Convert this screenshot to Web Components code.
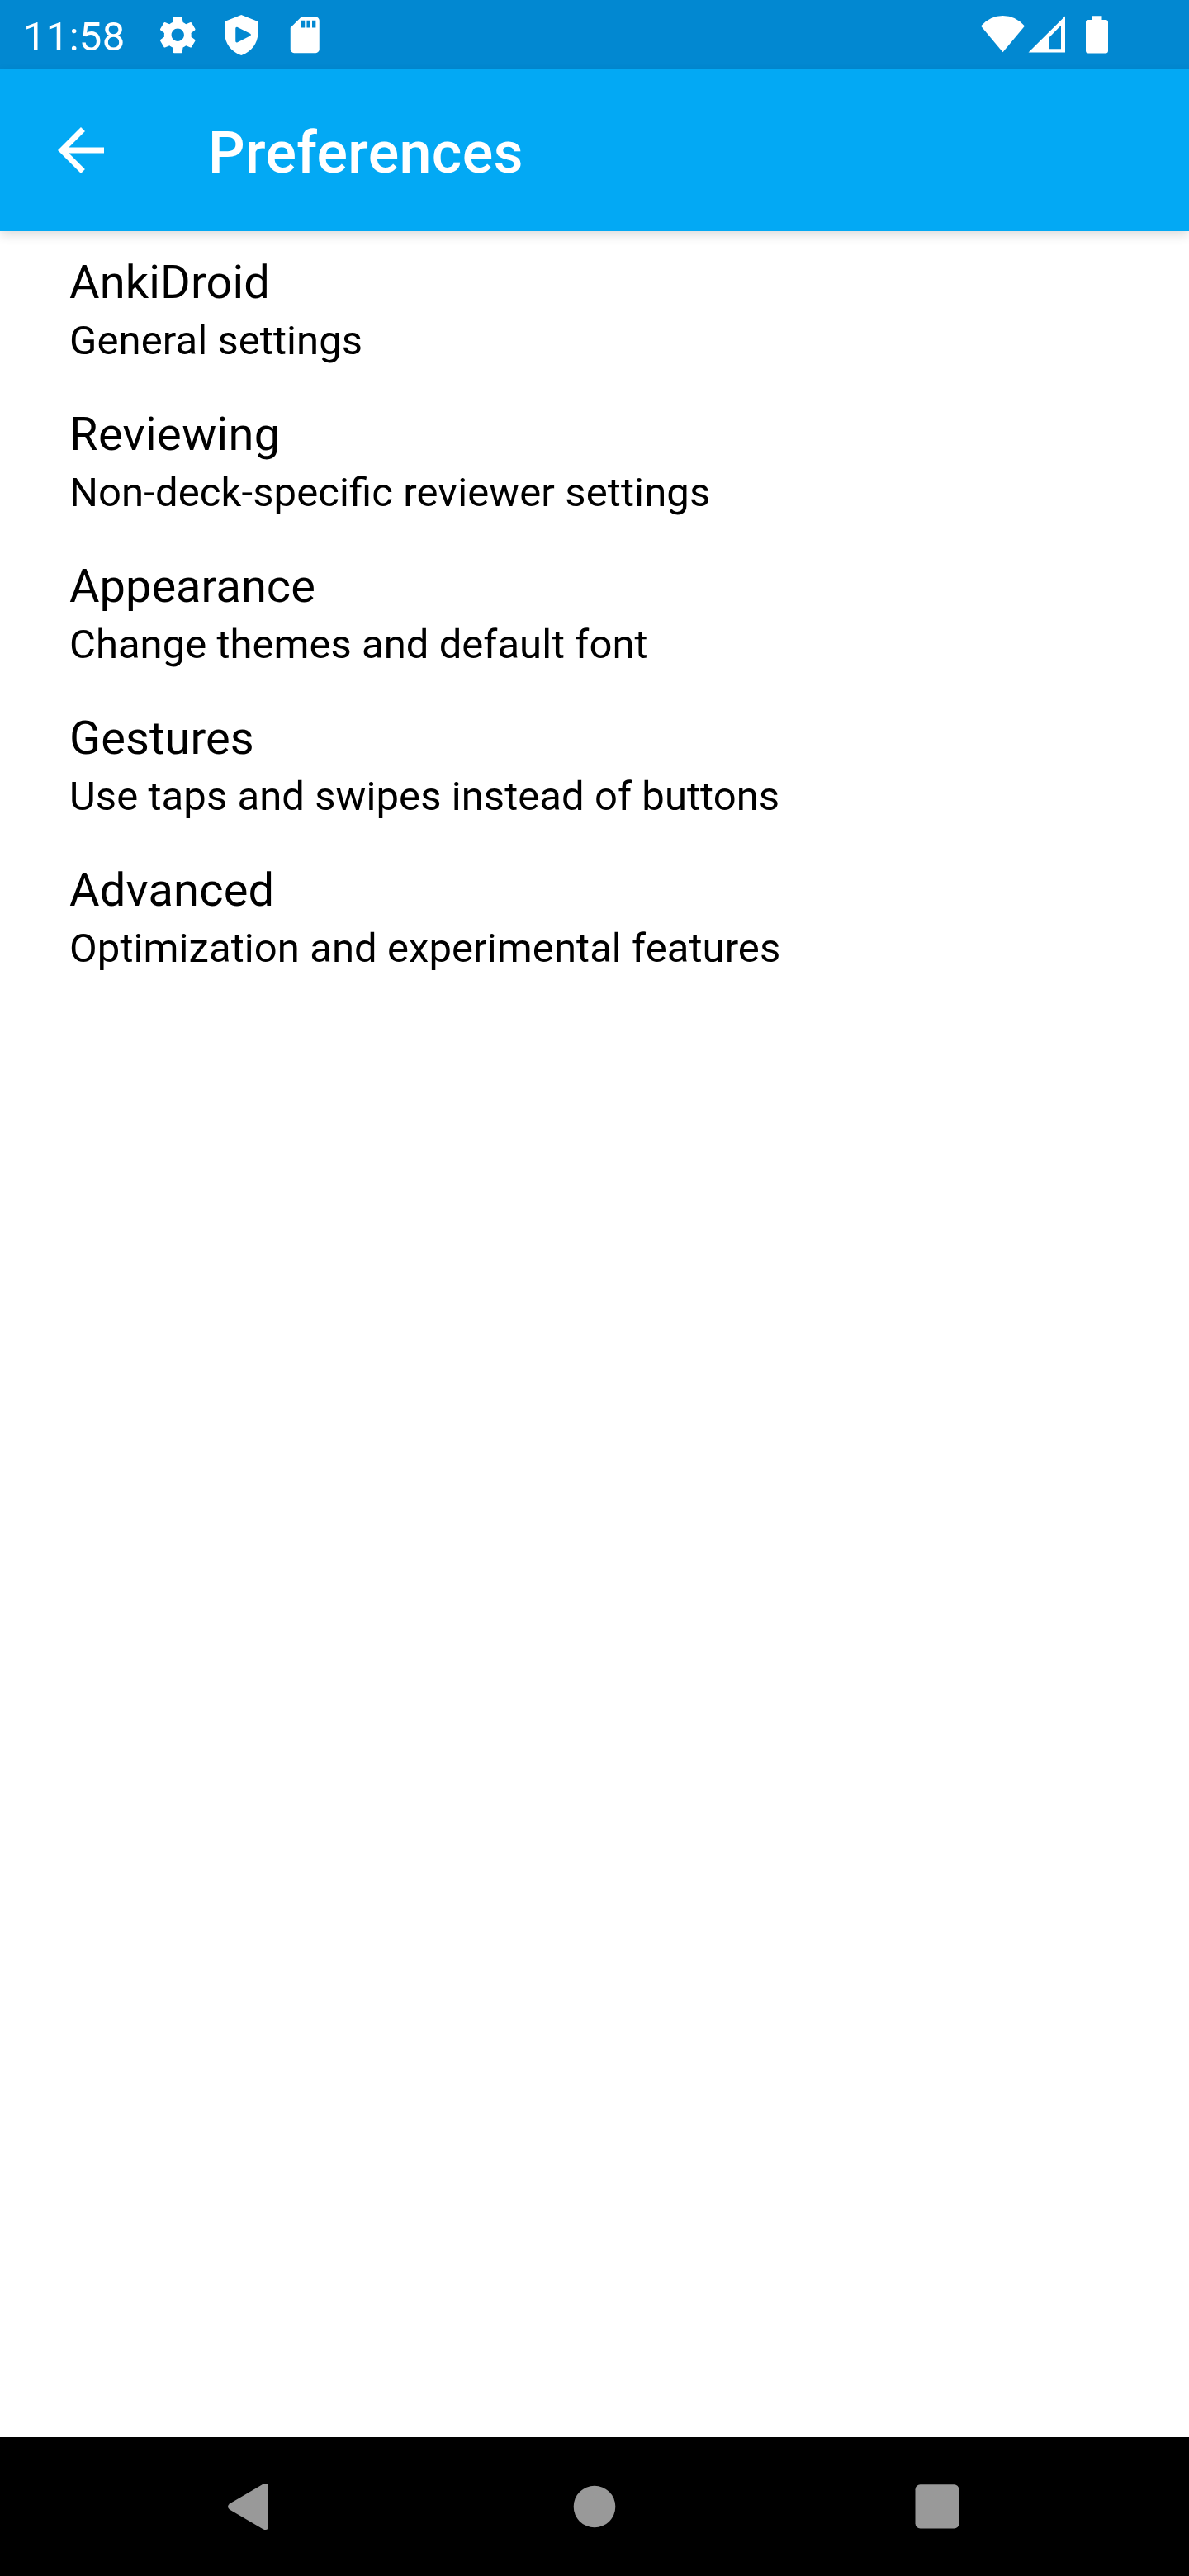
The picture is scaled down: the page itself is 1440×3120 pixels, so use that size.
<!DOCTYPE html>
<html lang="en">
<head>
<meta charset="utf-8">
<title>Preferences</title>
<style>
html,body{margin:0;padding:0;background:#fff}
body{font-family:Roboto,"Liberation Sans",sans-serif}
</style>
</head>
<body>
<phone-screen>
  <status-bar slot="top" time="11:58"></status-bar>
  <app-toolbar slot="top">Preferences</app-toolbar>
  <pref-item style="--t:.14px;--s:.08px">AnkiDroid<span slot="summary">General settings</span></pref-item>
  <pref-item style="--t:.37px;--s:.11px">Reviewing<span slot="summary">Non-deck-specific reviewer settings</span></pref-item>
  <pref-item style="--t:0px;--s:.03px">Appearance<span slot="summary">Change themes and default font</span></pref-item>
  <pref-item style="--t:.1px;--s:.07px">Gestures<span slot="summary">Use taps and swipes instead of buttons</span></pref-item>
  <pref-item style="--t:.2px;--s:.08px">Advanced<span slot="summary">Optimization and experimental features</span></pref-item>
  <nav-bar slot="bottom"></nav-bar>
</phone-screen>
<script>
const define = (name, html) => customElements.define(name, class extends HTMLElement {
  constructor() {
    super();
    this.attachShadow({mode: 'open'}).innerHTML = html;
  }
  connectedCallback() {
    const t = this.shadowRoot.querySelector('time');
    if (t) t.textContent = this.getAttribute('time');
  }
});

define('phone-screen', `
<style>
:host{display:flex;flex-direction:column;width:1440px;height:3120px;background:#fff;overflow:hidden}
main{flex:1;display:flex;flex-direction:column}
</style>
<slot name="top"></slot><main><slot></slot></main><slot name="bottom"></slot>`);

define('status-bar', `
<style>
:host{display:flex;justify-content:space-between;height:84px;background:#0288d1;color:#fff}
div{display:flex;align-items:flex-start}
time{font-size:49px;line-height:57px;letter-spacing:.3px;padding:16px 0 0 28px;width:161px}
svg{display:block;fill:#fff;margin-top:16px;flex:none}
.l{width:52.5px;height:52.5px;margin-right:24.5px}
</style>
<div>
<time></time>
<svg class="l" viewBox="0 0 24 24"><path d="M19.43 12.98c.04-.32.07-.64.07-.98s-.03-.66-.07-.98l2.11-1.65c.19-.15.24-.42.12-.64l-2-3.46c-.12-.22-.39-.3-.61-.22l-2.49 1c-.52-.4-1.08-.73-1.69-.98l-.38-2.65A.488.488 0 0 0 14 2h-4c-.25 0-.46.18-.49.42l-.38 2.65c-.61.25-1.17.59-1.69.98l-2.49-1c-.23-.09-.49 0-.61.22l-2 3.46c-.13.22-.07.49.12.64l2.11 1.65c-.04.32-.07.65-.07.98s.03.66.07.98l-2.11 1.65c-.19.15-.24.42-.12.64l2 3.46c.12.22.39.3.61.22l2.49-1c.52.4 1.08.73 1.69.98l.38 2.65c.03.24.24.42.49.42h4c.25 0 .46-.18.49-.42l.38-2.65c.61-.25 1.17-.59 1.69-.98l2.49 1c.23.09.49 0 .61-.22l2-3.46c.12-.22.07-.49-.12-.64l-2.11-1.65zM12 15.5c-1.93 0-3.5-1.57-3.5-3.5s1.57-3.5 3.5-3.5 3.5 1.57 3.5 3.5-1.57 3.5-3.5 3.5z"/></svg>
<svg class="l" viewBox="0 0 24 24"><path fill-rule="evenodd" d="M12 .9L2.800 4.600v6.600c0 5.400 3.700 10.300 9.200 12.100 5.500-1.800 9.200-6.700 9.200-12.100V4.600zM8.800 8.600c0-.8.5-1.100 1.100-.8l6.900 3.400c.7.4.7 1 0 1.400l-6.900 3.500c-.6.300-1.100 0-1.100-.8z"/></svg>
<svg class="l" viewBox="0 0 24 24"><path d="M18 2h-8L4 8v12c0 1.100.9 2 2 2h12c1.100 0 2-.9 2-2V4c0-1.100-.9-2-2-2zm-6 6h-2V4h2zm3 0h-2V4h2zm3 0h-2V4h2z"/></svg>
</div>
<svg width="260" height="52" viewBox="1180 16 260 52">
<path d="M1188 31.500Q1199 19 1214.500 19T1241 31.500L1214.500 63.300z"/>
<path fill-rule="evenodd" d="M1245.500 63.600L1290 19.500V63.600zM1270 46V59.300H1285V30.700z"/>
<path d="M1323 19.200H1334.500V24H1339Q1342 24 1342 27V61.500Q1342 64.500 1339 64.500H1318Q1315 64.500 1315 61.500V27Q1315 24 1318 24H1323z"/>
</svg>`);

define('app-toolbar', `
<style>
:host{display:flex;align-items:center;height:196px;background:#03a9f4;color:#fff;box-shadow:0 5px 12px rgba(0,0,0,.135);font-size:70px;font-weight:500;line-height:82px;letter-spacing:.32px}
svg{display:block;width:84px;height:84px;margin:0 112px 0 56px;fill:#fff}
div{padding-top:6px}
</style>
<svg viewBox="0 0 24 24"><path d="M20 11H7.830l5.590-5.590L12 4l-8 8 8 8 1.410-1.410L7.830 13H20v-2z"/></svg>
<div><slot></slot></div>`);

define('pref-item', `
<style>
:host{display:flex;flex-direction:column;gap:9px;box-sizing:border-box;height:184px;padding:29px 84px 23px;color:#000}
.t{font-size:56px;line-height:66px;letter-spacing:var(--t,0)}
.s{font-size:49px;line-height:57px;letter-spacing:var(--s,0);font-feature-settings:"liga" 1}
</style>
<div class="t"><slot></slot></div><div class="s"><slot name="summary"></slot></div>`);

define('nav-bar', `
<style>
:host{display:flex;height:168px;background:#000}
svg{display:block;fill:#999}
</style>
<svg width="1440" height="168" viewBox="0 2952 1440 168">
<path d="M278 3032.500L318.500 3008.800Q325 3006 325 3012.500V3059.500Q325 3066 318.500 3063.200L278 3039.500Q274 3036 278 3032.500z"/>
<circle cx="720" cy="3036" r="25.300"/>
<rect x="1108.500" y="3009.300" width="53" height="53.200" rx="6"/>
</svg>`);
</script>
</body>
</html>
